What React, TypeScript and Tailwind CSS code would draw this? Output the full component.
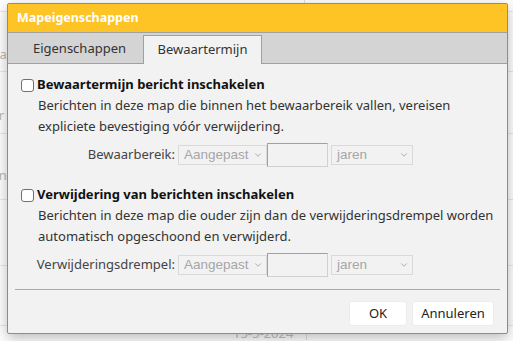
import { ChevronDown } from "lucide-react";

const FONT = "font-['Segoe_UI','Noto_Sans',sans-serif]";

/* ── Background list behind the dialog ─────────────────────────── */
function BackgroundList() {
  const rows = [
    { h: "h-[12px]", text: "", pb: "" },
    { h: "h-[60px]", text: "Jua", pb: "pb-[9px]" },
    { h: "h-[62px]", text: "Jar", pb: "pb-[10px]" },
    { h: "h-[66px]", text: "Jan", pb: "pb-[16px]" },
    { h: "h-[66px]", text: "", pb: "" },
    { h: "h-[60px]", text: "", pb: "" },
  ];
  return (
    <div className="w-full h-full bg-white">
      {rows.map((r, i) => (
        <div
          key={i}
          className={`${r.h} ${r.pb} border-b border-[#e8e8e8] flex items-end`}
        >
          {r.text && (
            <span className="-ml-[12px] text-[13px] leading-[16px] text-[#b8b8b8]">
              {r.text}
            </span>
          )}
          {i === 0 && <div className="ml-[304px] h-full border-l border-[#e0e0e0]" />}
        </div>
      ))}
      <div className="flex">
        <div className="w-[306px] pl-[233px] text-[13px] leading-[14px] text-[#c4c4c4]">
          15-5-2024
        </div>
        <div className="border-l border-[#e0e0e0] h-[14px]" />
      </div>
    </div>
  );
}

/* ── Small disabled select ──────────────────────────────────────── */
function FakeSelect({ label, width }: { label: string; width: string }) {
  return (
    <div
      className={`${width} h-[20px] border border-[#d9d9d9] bg-[#f2f2f2] flex items-center justify-between pl-[5px] pr-[3px]`}
    >
      <span className="text-[13.5px] text-[#a6a6a6] font-['Liberation_Sans',sans-serif] leading-none">
        {label}
      </span>
      <ChevronDown size={10} strokeWidth={2.2} className="text-[#a6a6a6]" />
    </div>
  );
}

function RangeRow({ label }: { label: string }) {
  return (
    <div className="flex items-center mt-[6px]">
      <div className="w-[170px] text-right pr-[3px] text-[13px] text-[#444]">
        {label}
      </div>
      <FakeSelect label="Aangepast" width="w-[89px]" />
      <div className="w-[61px] h-[24px] border border-[#a0a0a0] border-r-[#d0d0d0] border-b-[#d0d0d0] bg-[#f2f2f2]" />
      <div className="ml-[3px]">
        <FakeSelect label="jaren" width="w-[82px]" />
      </div>
    </div>
  );
}

function Section({
  title,
  lines,
  label,
}: {
  title: string;
  lines: string[];
  label: string;
}) {
  return (
    <div>
      <div className="flex items-center h-[20px]">
        <div className="w-[13px] h-[13px] rounded-[3px] border border-[#707070] bg-white ml-[13px]" />
        <span className="ml-[3px] text-[13px] font-bold text-[#111]">{title}</span>
      </div>
      <div className="pl-[30px] text-[13px] leading-[21px] text-[#333] whitespace-nowrap">
        {lines.map((l) => (
          <div key={l}>{l}</div>
        ))}
      </div>
      <RangeRow label={label} />
    </div>
  );
}

export default function App() {
  return (
    <div className={`relative w-[513px] h-[341px] overflow-hidden ${FONT}`}>
      <BackgroundList />

      {/* ── Dialog ─────────────────────────────────────────────── */}
      <div className="absolute left-[7px] top-[3px] w-[501px] h-[331px] bg-[#f2f2f2] border border-[#8c8c8c] rounded-[2px] shadow-[0_4px_14px_rgba(0,0,0,0.28)] flex flex-col">
        {/* Title bar */}
        <div className="shrink-0 h-[29px] bg-[#fec325] border-b border-[#a0a0a0] flex items-center pl-[9px]">
          <span className="text-[12.5px] font-bold text-white">Mapeigenschappen</span>
        </div>

        {/* Tabs */}
        <div className="shrink-0 h-[31px] bg-[#d4d4d4] flex items-end">
          <div className="w-[135px] h-[30px] flex items-center justify-center border-b border-[#a0a0a0] text-[13px] text-[#333] pl-[8px]">
            Eigenschappen
          </div>
          <div className="w-[119px] h-[29px] bg-[#f2f2f2] border border-b-0 border-[#a0a0a0] flex items-center justify-center text-[13px] text-[#333]">
            Bewaartermijn
          </div>
          <div className="flex-1 h-full border-b border-[#a0a0a0]" />
        </div>

        {/* Content */}
        <div className="flex-1 pt-[11px]">
          <Section
            title="Bewaartermijn bericht inschakelen"
            lines={[
              "Berichten in deze map die binnen het bewaarbereik vallen, vereisen",
              "expliciete bevestiging vóór verwijdering.",
            ]}
            label="Bewaarbereik:"
          />
          <div className="h-[18px]" />
          <Section
            title="Verwijdering van berichten inschakelen"
            lines={[
              "Berichten in deze map die ouder zijn dan de verwijderingsdrempel worden",
              "automatisch opgeschoond en verwijderd.",
            ]}
            label="Verwijderingsdrempel:"
          />

          <div className="mx-[7px] mt-[12px] border-t border-[#a8a8a8]" />

          <div className="flex justify-end gap-[5px] mt-[11px] pr-[13px]">
            <button className="w-[58px] h-[25px] bg-white rounded-[3px] border border-[#ececec] text-[13px] text-[#222]">
              OK
            </button>
            <button className="w-[82px] h-[25px] bg-white rounded-[3px] border border-[#ececec] text-[13px] text-[#222]">
              Annuleren
            </button>
          </div>
        </div>
      </div>
    </div>
  );
}
